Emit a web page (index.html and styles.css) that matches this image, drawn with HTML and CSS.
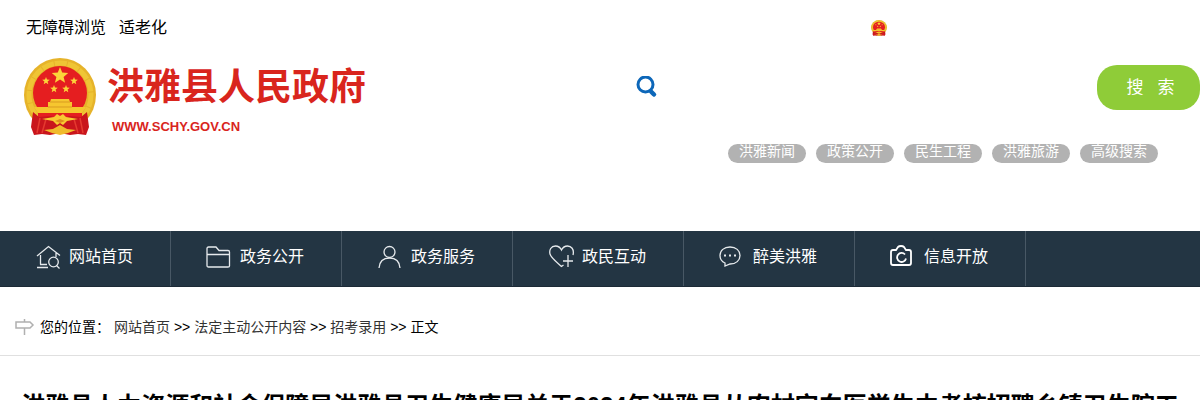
FILE: index.html
```html
<!DOCTYPE html>
<html lang="zh-CN">
<head>
    <meta charset="UTF-8">
    <meta name="viewport" content="width=device-width, initial-scale=1.0">
    <title>洪雅县人民政府</title>
    <link rel="stylesheet" href="styles.css">
</head>
<body>
    <header class="header">
        <div class="top-bar">
            <div class="top-links">
                <a href="#">无障碍浏览</a>
                <a href="#">适老化</a>
            </div>
            <svg class="mini-emblem" viewBox="0 0 72 78" preserveAspectRatio="none" aria-hidden="true"><use href="#emblem"/></svg>
        </div>

        <div class="header-main">
            <a href="#" class="logo">
                <svg class="emblem" viewBox="0 0 72 78" aria-hidden="true">
                    <g id="emblem">
                        <ellipse cx="36" cy="37" rx="36" ry="37" fill="#e6b32a"/>
                        <ellipse cx="36" cy="37" rx="31" ry="32" fill="none" stroke="#efc535" stroke-width="5" stroke-dasharray="12 1"/>
                        <circle cx="36" cy="35" r="27" fill="#e51e20"/>
                        <path d="M36 9l2.200 5.600 6 .4-4.600 3.900 1.500 5.800-5.100-3.200-5.100 3.200 1.500-5.800-4.600-3.900 6-.4z" fill="#fbd43a"/>
                        <path id="star" d="M22 19l1 2.600 2.800.2-2.200 1.800.7 2.700-2.300-1.500-2.300 1.500.7-2.700-2.200-1.800 2.800-.2z" fill="#fbd43a"/>
                        <use href="#star" x="28"/>
                        <use href="#star" x="8" y="8"/>
                        <use href="#star" x="20" y="8"/>
                        <path d="M27 41h18l1 3h2v5h14l-4 6H14l-4-6h14v-5h2z" fill="#f6c62f"/>
                        <path d="M26 44h20M24 49h24" stroke="#d99b20" stroke-width="1"/>
                        <path d="M14 55h44v8H14z" fill="#e51e20"/>
                        <path d="M9 54l6 5 12-1 9 4 9-4 12 1 6-5 2 15-3 8-8-1-8 1-10-2-10 2-8-1-8 1-3-8z" fill="#c9151c"/>
                        <path d="M16 60l-3 15M22 61l-4 14M56 60l3 15M50 61l4 14" stroke="#e53a30" stroke-width="1.500"/>
                        <path d="M18 61l12-2 3-3 3 2 3-2 3 3 12 2-11 2-4 4-3-2-3 2-4-4z" fill="#f8ca32"/>
                        <path d="M20 72l9-1 7-4 7 4 9 1-8 3-8 2-8-2z" fill="#f0bb2c"/>
                        <path d="M31 63l5-2 5 2-5 2z" fill="#e08e1d"/>
                    </g>
                </svg>
                <span class="logo-text">
                    <strong class="logo-name">洪雅县人民政府</strong>
                    <span class="logo-url">WWW.SCHY.GOV.CN</span>
                </span>
            </a>

            <div class="search">
                <form class="search-form">
                    <label for="keyword" class="search-label" aria-label="搜索">
                        <svg viewBox="0 0 22 24" fill="none" stroke="#0d67b9">
                            <circle cx="9.500" cy="8.500" r="7.500" stroke-width="3"/>
                            <path d="M15 15.500l3 3" stroke-width="4.500" stroke-linecap="round"/>
                        </svg>
                    </label>
                    <input type="text" id="keyword" class="search-input">
                    <button type="submit" class="search-btn">搜 &nbsp; 索</button>
                </form>
                <div class="tags">
                    <a href="#">洪雅新闻</a>
                    <a href="#">政策公开</a>
                    <a href="#">民生工程</a>
                    <a href="#">洪雅旅游</a>
                    <a href="#">高级搜索</a>
                </div>
            </div>
        </div>
    </header>

    <nav class="nav">
        <a href="#">
            <svg viewBox="0 0 24 24"><path d="M1 11L12.500 1.500 24 10.500M4.500 10v9.500M1 22.500h11M4 19.500h7M20 8v4"/><circle cx="17.500" cy="17" r="4.800"/><path d="M20.500 20.500l3 3"/></svg>
            网站首页
        </a>
        <a href="#">
            <svg viewBox="0 0 24 24"><path d="M0 20.500v-17Q0 2 1.500 2H9l3 3.500h9q1.500 0 1.500 1.500v14q0 1-1.500 1H1.500Q0 22 0 20.500zM0 9.500h22.500"/></svg>
            政务公开
        </a>
        <a href="#">
            <svg viewBox="0 0 24 24"><circle cx="11.500" cy="7" r="5.500"/><path d="M1 23C1.500 16.500 5.500 13 11.500 13S21.500 16.500 22 23"/></svg>
            政务服务
        </a>
        <a href="#">
            <svg viewBox="0 0 24 24"><path d="M24 10C25.500 4 22 1 18.500 1 15 1 13 4 12.500 5 11.500 3 9.500 1 6.500 1 2 1 0 5 1 9c1 4 9 10 11.500 12.500l2-1.500M19 10v12M14 16h10"/></svg>
            政民互动
        </a>
        <a href="#">
            <svg viewBox="0 0 24 24"><path d="M5 18C1.500 16.500 0 14 0 10.500 0 5.500 4 2 10 2s10 3.500 10 8.500-4 8.500-10 8.500L5 21z"/><path d="M4 10.500h2M9 10.500h2M14 10.500h2" stroke-width="2"/></svg>
            醉美洪雅
        </a>
        <a href="#">
            <svg viewBox="0 0 24 24" class="bold"><path d="M3 5h2l2-3q1-1 3-1t3 1l2 3h3q2 0 2 2v11q0 2-2 2H2q-2 0-2-2V7q0-2 2-2z"/><path d="M14 9.500A4.500 4.500 0 1 0 15 13.500"/></svg>
            信息开放
        </a>
    </nav>

    <div class="breadcrumb">
        <svg viewBox="0 0 20 20" aria-hidden="true"><path d="M1 5h14l3 3-3 3H1zM9.500 2v3M9.500 11v7"/></svg>
        <span class="breadcrumb-label">您的位置：</span>
        <p><a href="#">网站首页</a> &gt;&gt; <a href="#">法定主动公开内容</a> &gt;&gt; <a href="#">招考录用</a> &gt;&gt; 正文</p>
    </div>

    <main class="article">
        <h1>洪雅县人力资源和社会保障局洪雅县卫生健康局关于2024年洪雅县从农村定向医学生中考核招聘乡镇卫生院工作人员的公告</h1>
    </main>
</body>
</html>
```

FILE: styles.css
```css
* {
    margin: 0;
    padding: 0;
    box-sizing: border-box;
}

body {
    font-family: "Liberation Sans", "Noto Sans CJK SC", sans-serif;
    font-size: 14px;
    line-height: 20px;
    color: #000;
    background: #fff;
}

a {
    color: inherit;
    text-decoration: none;
}

.header {
    padding: 16px 0 68px;
}

.top-bar {
    display: flex;
    justify-content: space-between;
    align-items: center;
    padding: 0 313px 0 26px;
    font-size: 16px;
    line-height: 24px;
}

.top-links {
    display: flex;
    gap: 13px;
}

.mini-emblem {
    width: 16px;
    height: 16px;
}

.header-main {
    display: flex;
    justify-content: space-between;
    align-items: flex-start;
    padding-top: 18px;
}

.logo {
    display: flex;
    gap: 11px;
    padding-left: 24px;
    color: #d9251d;
}

.emblem {
    width: 72px;
    height: 78px;
}

.logo-text {
    display: flex;
    flex-direction: column;
    gap: 7px;
    padding-top: 10px;
}

.logo-name {
    font-size: 37px;
    line-height: 40px;
}

.logo-url {
    padding-left: 5px;
    font-size: 13px;
    font-weight: bold;
    line-height: 24px;
}

.search {
    width: 47%;
    padding-top: 7px;
}

.search-form {
    display: flex;
    align-items: center;
}

.search-label svg {
    display: block;
    width: 22px;
    height: 24px;
}

.search-input {
    flex: 1;
    min-width: 0;
    height: 45px;
    padding: 0 10px;
    border: 0;
    outline: 0;
    background: transparent;
    font-size: 16px;
}

.search-btn {
    width: 103px;
    height: 45px;
    padding: 0 0 4px 4px;
    border: 0;
    border-radius: 20px;
    background: #8fcc38;
    color: #fff;
    font-family: inherit;
    font-size: 17px;
    cursor: pointer;
}

.tags {
    display: flex;
    justify-content: flex-end;
    gap: 10px;
    padding: 34px 42px 0 0;
}

.tags a {
    width: 78px;
    height: 19px;
    border-radius: 10px;
    background: #b2b2b2;
    color: #fff;
    line-height: 15px;
    text-align: center;
}

.nav {
    display: flex;
    height: 56px;
    background: #233543;
    border-bottom: 1px solid #1c2a36;
}

.nav a {
    display: flex;
    align-items: center;
    gap: 9px;
    width: 171px;
    padding: 0 0 4px 36px;
    border-right: 1px solid #485865;
    color: #fff;
    font-size: 16px;
}

.nav svg {
    width: 24px;
    height: 24px;
    overflow: visible;
    fill: none;
    stroke: #e6eaed;
    stroke-width: 1.3;
}

.nav svg.bold {
    stroke: #fff;
    stroke-width: 1.8;
}

.breadcrumb {
    display: flex;
    align-items: center;
    height: 69px;
    padding: 12px 15px 0;
    border-bottom: 1px solid #e0e0e0;
}

.breadcrumb svg {
    width: 20px;
    height: 20px;
    margin-right: 5px;
    fill: none;
    stroke: #b0b0b0;
    stroke-width: 1.5;
}

.breadcrumb-label {
    margin-right: 4px;
}

.breadcrumb a {
    color: #333;
}

.article {
    padding: 30px 20px;
}

.article h1 {
    font-size: 24px;
    line-height: 40px;
    text-align: center;
}
```
